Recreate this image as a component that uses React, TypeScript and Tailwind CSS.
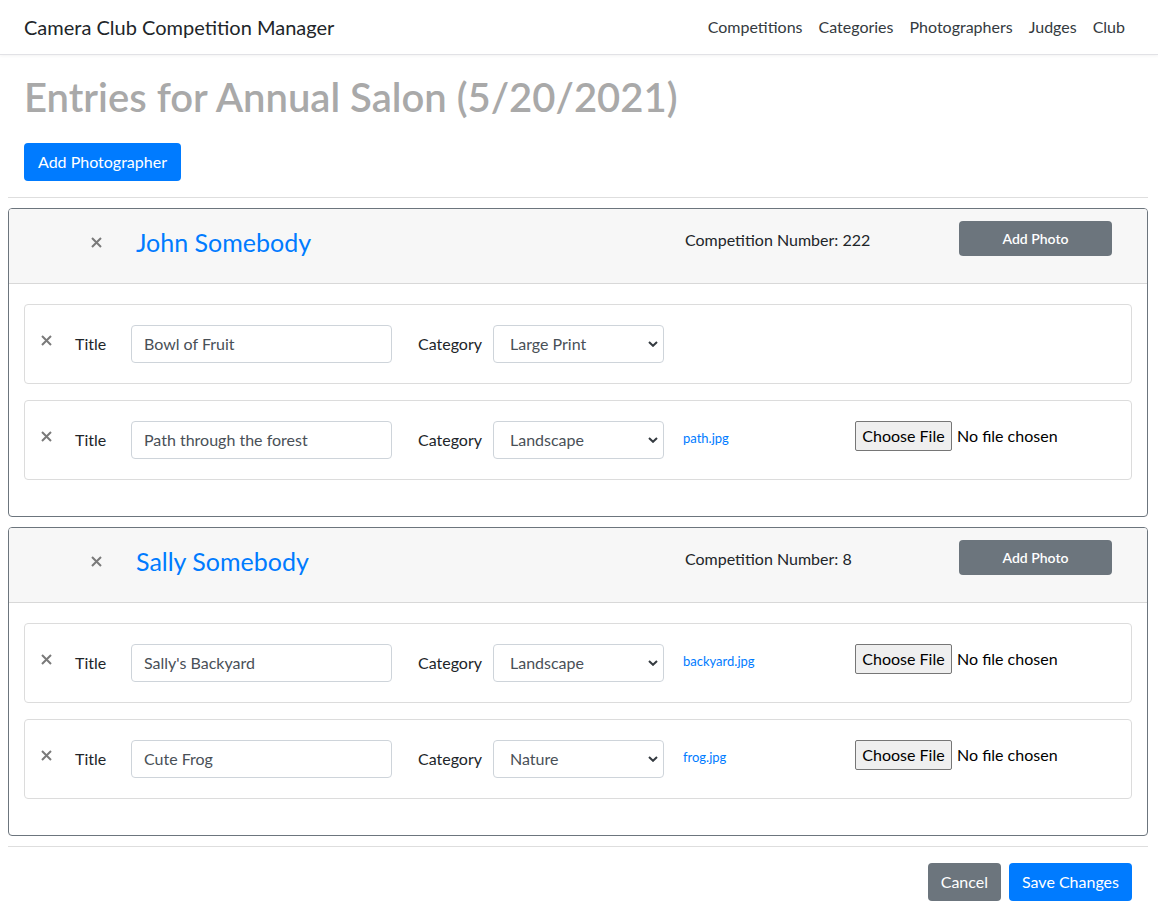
const FONT = { fontFamily: "Lato, 'Open Sans', 'Liberation Sans', sans-serif" };

type Photo = { title: string; category: string; file?: string };
type Entrant = { name: string; number: number; photos: Photo[] };

const entrants: Entrant[] = [
  {
    name: "John Somebody",
    number: 222,
    photos: [
      { title: "Bowl of Fruit", category: "Large Print" },
      { title: "Path through the forest", category: "Landscape", file: "path.jpg" },
    ],
  },
  {
    name: "Sally Somebody",
    number: 8,
    photos: [
      { title: "Sally's Backyard", category: "Landscape", file: "backyard.jpg" },
      { title: "Cute Frog", category: "Nature", file: "frog.jpg" },
    ],
  },
];

function CloseX() {
  return (
    <svg width="11" height="11" viewBox="0 0 11 11" className="shrink-0">
      <path d="M1 1L10 10M10 1L1 10" stroke="#7a7a7a" strokeWidth="2" />
    </svg>
  );
}

function Chevron() {
  return (
    <svg width="10" height="6" viewBox="0 0 10 6">
      <path d="M1 1l4 3.8L9 1" fill="none" stroke="#343a40" strokeWidth="2" />
    </svg>
  );
}

function PhotoRow({ photo }: { photo: Photo }) {
  return (
    <div className="flex items-start border border-[#dcdcdc] rounded-[4px] pl-[16px] py-[20px]">
      <div className="mt-[10px]">
        <CloseX />
      </div>
      <div className="ml-[23px] w-[56px] leading-[38px] text-[16px] text-[#212529]">Title</div>
      <div className="w-[261px] h-[38px] border border-[#ced4da] rounded-[4px] px-[12px] flex items-center text-[16px] text-[#495057]">
        {photo.title}
      </div>
      <div className="ml-[26px] w-[75px] leading-[38px] text-[16px] text-[#212529]">Category</div>
      <div className="w-[171px] h-[38px] border border-[#ced4da] rounded-[4px] pl-[16px] pr-[5px] flex items-center justify-between text-[16px] text-[#495057]">
        <span>{photo.category}</span>
        <Chevron />
      </div>
      {photo.file && (
        <>
          <div className="ml-[19px] w-[172px] text-[13px] leading-[34px] text-[#007bff]">{photo.file}</div>
          <div className="flex items-center h-[30px]">
            <span className="h-[30px] w-[97px] flex items-center justify-center bg-[#efefef] border border-[#767676] rounded-[2px] text-[16px] text-black">
              Choose File
            </span>
            <span className="ml-[5px] text-[16px] text-black">No file chosen</span>
          </div>
        </>
      )}
    </div>
  );
}

function EntrantCard({ entrant }: { entrant: Entrant }) {
  return (
    <div className="border border-[#6c757d] rounded-[4px] overflow-hidden">
      <div className="h-[75px] bg-[#f7f7f7] border-b border-[#d8d8d8] flex items-start">
        <div className="ml-[82px] mt-[28px]">
          <CloseX />
        </div>
        <div className="ml-[34px] w-[549px] mt-[18px] text-[25px] leading-[31px] text-[#007bff]">{entrant.name}</div>
        <div className="w-[274px] mt-[19px] text-[16px] leading-[24px] text-[#212529]">
          Competition Number: {entrant.number}
        </div>
        <button className="mt-[12px] w-[153px] h-[35px] bg-[#6c757d] rounded-[4px] text-white text-[14px] font-semibold">
          Add Photo
        </button>
      </div>
      <div className="px-[15px] pt-[20px] pb-[36px] flex flex-col gap-[16px]">
        {entrant.photos.map((p) => (
          <PhotoRow key={p.title} photo={p} />
        ))}
      </div>
    </div>
  );
}

export default function App() {
  return (
    <div className="min-h-screen bg-white text-[#212529]" style={FONT}>
      <nav className="h-[55px] border-b border-[#e2e2e6] shadow-[0_1px_3px_rgba(0,0,0,0.05)] flex items-center justify-between pl-[24px] pr-[33px]">
        <span className="text-[20px] text-[#212529]">Camera Club Competition Manager</span>
        <div className="flex gap-[16px] text-[16px] text-[#343a40]">
          <span>Competitions</span>
          <span>Categories</span>
          <span>Photographers</span>
          <span>Judges</span>
          <span>Club</span>
        </div>
      </nav>

      <div className="px-[24px] pt-[18px]">
        <h1 className="text-[40px] leading-[48px] font-semibold text-[#a9a9a9]">Entries for Annual Salon (5/20/2021)</h1>
        <button className="mt-[22px] h-[38px] px-[14px] bg-[#007bff] rounded-[4px] text-white text-[16px]">
          Add Photographer
        </button>
      </div>

      <div className="pl-[8px] pr-[10px]">
        <hr className="mt-[16px] border-t border-[#dedede]" />
        <div className="mt-[10px] flex flex-col gap-[10px]">
          {entrants.map((e) => (
            <EntrantCard key={e.name} entrant={e} />
          ))}
        </div>
        <hr className="mt-[10px] border-t border-[#dedede]" />
        <div className="flex justify-end gap-[8px] pr-[16px] pt-[16px]">
          <button className="h-[38px] px-[13px] bg-[#6c757d] rounded-[4px] text-white text-[16px]">Cancel</button>
          <button className="h-[38px] px-[13px] bg-[#007bff] rounded-[4px] text-white text-[16px]">Save Changes</button>
        </div>
      </div>
    </div>
  );
}
